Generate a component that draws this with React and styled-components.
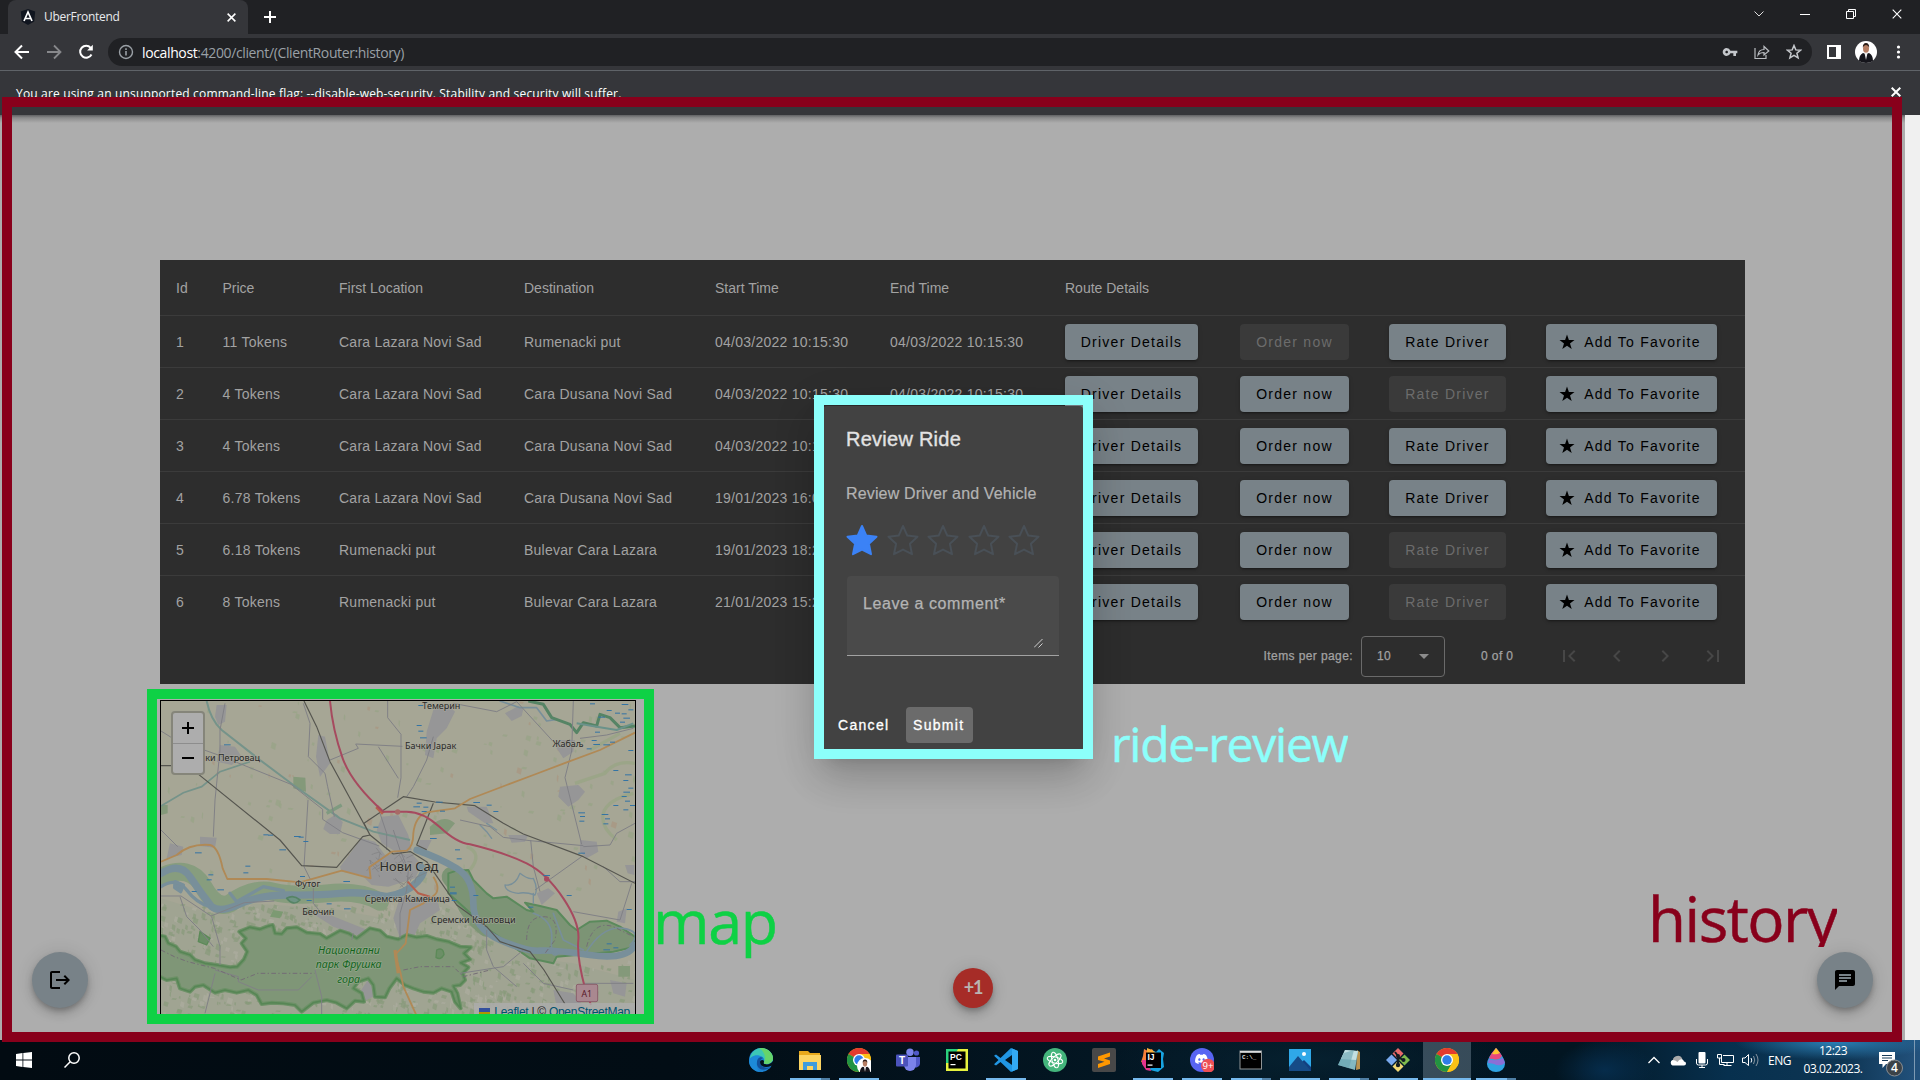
import React from "react";
import styled, { createGlobalStyle, css } from "styled-components";
import { MdLogout, MdChat, MdFirstPage, MdChevronLeft, MdChevronRight, MdLastPage, MdVpnKey } from "react-icons/md";
import { FaDiscord } from "react-icons/fa";

const ui = `"Open Sans", "Noto Sans", sans-serif`;
const arial = `"Liberation Sans", Arial, sans-serif`;

const Global = createGlobalStyle`
  * { box-sizing: border-box; }
  body { margin: 0; background: #202124; overflow: hidden; }
  svg { display: block; }
`;

const Screen = styled.div`
  position: relative;
  width: 1920px;
  height: 1080px;
  display: flex;
  flex-direction: column;
  overflow: hidden;
  font-family: ${arial};
`;

/* ---------- browser chrome ---------- */

const TabStrip = styled.header`
  height: 34px;
  background: #202124;
  display: flex;
  padding-left: 8px;
  font-family: ${ui};
`;

const Tab = styled.div`
  width: 240px;
  height: 34px;
  background: #35363a;
  border-radius: 8px 8px 0 0;
  display: flex;
  align-items: center;
  padding: 0 12px 0 12px;
  color: #e8eaed;
  font-size: 12px;
`;

const TabTitle = styled.span`
  flex: 1;
  margin-left: 8px;
  letter-spacing: -0.3px;
  line-height: 34px;
`;

const NewTab = styled.div`
  width: 28px;
  margin-left: 8px;
  display: grid;
  place-items: center;
`;

const WindowButtons = styled.div`
  margin-left: auto;
  display: flex;
  padding-bottom: 6px;
`;

const WindowButton = styled.div`
  width: 46px;
  display: grid;
  place-items: center;
`;

const Toolbar = styled.div`
  height: 37px;
  background: #35363a;
  border-bottom: 1px solid #5f6368;
  display: flex;
  align-items: center;
  padding-left: 12px;
`;

const NavIcons = styled.div`
  display: flex;
  gap: 12px;
  width: 96px;
`;

const AddressBar = styled.div`
  width: 1704px;
  height: 28px;
  border-radius: 14px;
  background: #202124;
  display: flex;
  align-items: center;
  padding: 0 10px 0 10px;
  font: 14px ${ui};
`;

const Url = styled.span`
  flex: 1;
  margin-left: 8px;
  color: #9aa0a6;
  letter-spacing: -0.37px;
  b { color: #fff; font-weight: 400; }
`;

const BarIcons = styled.div`
  display: flex;
  gap: 16px;
`;

const Extras = styled.div`
  display: flex;
  align-items: center;
  margin-left: 13px;
  gap: 12px;
`;

const InfoBar = styled.div`
  height: 44px;
  background: #35363a;
  color: #fff;
  display: flex;
  justify-content: space-between;
  align-items: flex-start;
  padding: 14px 19px 0 16px;
  font: 12px/18px ${ui};
`;

const InfoText = styled.span`
  letter-spacing: 0.17px;
`;

const InfoClose = styled.span`
  padding-top: 2px;
`;

/* ---------- page ---------- */

const Viewport = styled.main`
  height: 925px;
  display: flex;
  background: #f0f0f0;
`;

const Content = styled.div`
  position: relative;
  width: 1905px;
  background: #adadad;
  padding: 145px 160px 0;
  &::before {
    content: "";
    position: absolute;
    inset: 0 0 auto 0;
    height: 8px;
    background: linear-gradient(#606163, #8a8a8b 35%, #adadad);
  }
`;

const TableCard = styled.section`
  width: 1585px;
  height: 424px;
  background: #2d2d2d;
  color: #a2a2a2;
  font-size: 14px;
`;

const Row = styled.div`
  height: ${(p) => (p.$head ? 56 : 52)}px;
  display: grid;
  grid-template-columns: 46.5px 116.5px 185px 191px 175px 175px 175px 149px 157px 1fr;
  align-items: center;
  padding-left: 16px;
  border-bottom: 1px solid ${(p) => (p.$last ? "transparent" : "#3b3b3b")};
  letter-spacing: ${(p) => (p.$head ? 0 : 0.25)}px;
`;

const Button = styled.div`
  width: ${(p) => p.$w}px;
  height: 36px;
  border-radius: 4px;
  background: #788288;
  color: #000;
  display: flex;
  align-items: center;
  justify-content: center;
  gap: 8px;
  letter-spacing: 1.25px;
  white-space: nowrap;
  padding-right: ${(p) => (p.$icon ? 4 : 0)}px;
  box-shadow: 0 3px 1px -2px rgba(0, 0, 0, 0.2), 0 2px 2px 0 rgba(0, 0, 0, 0.14), 0 1px 5px 0 rgba(0, 0, 0, 0.12);
  ${(p) => p.$disabled && css`
    background: #3a3a3a;
    color: #6c6c6c;
    box-shadow: none;
  `}
`;

const Paginator = styled.div`
  height: 56px;
  display: flex;
  align-items: center;
  justify-content: flex-end;
  padding-right: 8px;
  font-size: 12px;
  letter-spacing: 0.4px;
  -webkit-text-stroke: 0.25px #a2a2a2;
`;

const PageSize = styled.div`
  width: 84px;
  height: 41px;
  margin: 0 36px 0 8px;
  border: 1px solid #6a6a6a;
  border-radius: 4px;
  display: flex;
  align-items: center;
  justify-content: space-between;
  padding: 0 15px 0 15px;
`;

const Range = styled.span`
  width: 64px;
`;

const PageButton = styled.span`
  width: 48px;
  display: grid;
  place-items: center;
  color: #474747;
`;

const MapBox = styled.section`
  position: relative;
  width: 476px;
  height: 320px;
  margin-top: 16px;
  border: 1px solid #000;
  background: #a6a695;
  overflow: hidden;
`;

const ZoomControl = styled.div`
  position: absolute;
  left: 10px;
  top: 10px;
  width: 34px;
  border: 2px solid #85857a;
  border-radius: 4px;
  background: #adadad;
`;

const ZoomButton = styled.div`
  height: 30px;
  display: grid;
  place-items: center;
  & + & { border-top: 1px solid #8d8d8d; }
`;

const Attribution = styled.div`
  position: absolute;
  right: 0;
  top: 302px;
  height: 18px;
  display: flex;
  align-items: center;
  padding: 0 5px;
  background: rgba(173, 173, 173, 0.8);
  font-size: 12px;
  letter-spacing: -0.28px;
  color: #222;
  white-space: pre;
  u { color: #00516f; }
  svg { margin-right: 4px; }
`;

const Fab = styled.div`
  position: absolute;
  left: ${(p) => p.$x}px;
  top: 837px;
  width: 56px;
  height: 56px;
  border-radius: 50%;
  background: #788288;
  color: #000;
  display: grid;
  place-items: center;
  box-shadow: 0 3px 5px -1px rgba(0, 0, 0, 0.2), 0 6px 10px rgba(0, 0, 0, 0.14), 0 1px 18px rgba(0, 0, 0, 0.12);
`;

const Counter = styled.div`
  position: absolute;
  left: 953px;
  top: 853px;
  width: 40px;
  height: 40px;
  border-radius: 50%;
  background: #a62c27;
  color: #b9b4b2;
  font: 700 18px/39px Lato, sans-serif;
  text-align: center;
  letter-spacing: -1.2px;
  box-shadow: 0 3px 5px -1px rgba(0, 0, 0, 0.2), 0 6px 10px rgba(0, 0, 0, 0.14), 0 1px 18px rgba(0, 0, 0, 0.12);
`;

const Dialog = styled.section`
  position: absolute;
  left: 823px;
  top: 291px;
  width: 260px;
  height: 346px;
  border-radius: 4px;
  background: #424242;
  color: #e3e3e3;
  padding: 20px 24px 0 23px;
  box-shadow: 0 11px 15px -7px rgba(0, 0, 0, 0.2), 0 24px 38px 3px rgba(0, 0, 0, 0.14), 0 9px 46px 8px rgba(0, 0, 0, 0.12);
`;

const DialogTitle = styled.h2`
  margin: 0;
  font: 400 20px/26px ${arial};
  letter-spacing: 0.25px;
  -webkit-text-stroke: 0.35px #e3e3e3;
`;

const DialogText = styled.p`
  margin: 30px 0 0;
  font-size: 16px;
  line-height: 24px;
  letter-spacing: 0.15px;
  color: #b3b3b3;
  white-space: nowrap;
  -webkit-text-stroke: 0.2px #b3b3b3;
`;

const Stars = styled.div`
  display: flex;
  gap: 8.5px;
  margin-top: 18px;
`;

const Comment = styled.div`
  width: 212px;
  height: 80px;
  margin: 20px 0 0 1px;
  border-radius: 4px 4px 0 0;
  border-bottom: 1px solid #a2a2a2;
  background: #4a4a4a;
  color: #b4b4b4;
  font-size: 16px;
  letter-spacing: 0.58px;
  padding: 19px 16px 7px 16px;
  display: flex;
  flex-direction: column;
  justify-content: space-between;
  -webkit-text-stroke: 0.25px #b4b4b4;
  svg { align-self: flex-end; }
`;

const Actions = styled.div`
  display: flex;
  margin: 51px 0 0 -15px;
  gap: 9px;
`;

const Action = styled.div`
  width: ${(p) => p.$w}px;
  height: 36px;
  border-radius: 4px;
  background: ${(p) => (p.$filled ? "#6b6b6b" : "transparent")};
  color: #fff;
  font-size: 14px;
  line-height: 36px;
  letter-spacing: 1.3px;
  padding-left: 7px;
  -webkit-text-stroke: 0.3px #fff;
`;

/* ---------- annotations over the page ---------- */

const Frame = styled.div`
  position: absolute;
  left: ${(p) => p.$x}px;
  top: ${(p) => p.$y}px;
  width: ${(p) => p.$w}px;
  height: ${(p) => p.$h}px;
  border: 10px solid ${(p) => p.$color};
`;

const Note = styled.div`
  position: absolute;
  left: ${(p) => p.$x}px;
  top: ${(p) => p.$y}px;
  height: ${(p) => p.$h}px;
  overflow: hidden;
  color: ${(p) => p.$color};
  font: ${(p) => p.$size}px/${(p) => p.$size + 20}px ${ui};
  letter-spacing: ${(p) => p.$ls || 0}px;
  white-space: nowrap;
  -webkit-text-stroke: 0.5px ${(p) => p.$color};
`;

/* ---------- taskbar ---------- */

const Taskbar = styled.footer`
  height: 40px;
  display: flex;
  align-items: stretch;
  background:
    radial-gradient(ellipse 100px 18px at 1835px 2px, #2b7fb5, transparent),
    radial-gradient(ellipse 50px 30px at 1605px 30px, #062c4b, transparent),
    radial-gradient(ellipse 200px 40px at 1310px 20px, #06202f, transparent),
    linear-gradient(90deg, #020b12, #020d15 35%, #031724 60%, #021521 82%, #07304e 90%, #0e3553 96%, #23527d);
  color: #fff;
  font-family: ${ui};
`;

const SystemIcons = styled.div`
  width: 737px;
  display: flex;
  align-items: center;
  gap: 32px;
  padding-left: 16px;
`;

const Apps = styled.div`
  display: flex;
  gap: 1px;
  width: 783px;
`;

const AppButton = styled.div`
  position: relative;
  width: 48px;
  flex: none;
  display: grid;
  place-items: center;
  background: ${(p) => (p.$run === "active" ? "rgba(120,140,155,0.45)" : "transparent")};
  &::after {
    content: "";
    position: absolute;
    bottom: 0;
    left: ${(p) => (p.$run === "active" ? 0 : 4)}px;
    right: ${(p) => (p.$run === "active" ? 0 : 4)}px;
    height: 2px;
    background: ${(p) =>
      !p.$run ? "none" : p.$run === "many" ? "linear-gradient(90deg,#76b9ed 31px,#4f7fa5 31px)" : "#76b9ed"};
  }
`;

const Tray = styled.div`
  flex: 1;
  display: flex;
  align-items: center;
  padding-left: 127px;
`;

const TrayIcons = styled.div`
  display: flex;
  align-items: center;
  width: 121px;
  gap: 8px;
`;

const Lang = styled.span`
  width: 32px;
  font-size: 12px;
  letter-spacing: -0.45px;
`;

const Clock = styled.div`
  width: 66px;
  font-size: 12px;
  line-height: 18px;
  letter-spacing: -0.5px;
  text-align: center;
  white-space: nowrap;
`;

const Notices = styled.div`
  margin-left: 13px;
  width: 36px;
  height: 40px;
  border-right: 1px solid #7d9ab3;
`;

/* ---------- data ---------- */

const rides = [
  [1, "11 Tokens", "Cara Lazara Novi Sad", "Rumenacki put", "04/03/2022 10:15:30", "04/03/2022 10:15:30", false, true],
  [2, "4 Tokens", "Cara Lazara Novi Sad", "Cara Dusana Novi Sad", "04/03/2022 10:15:30", "04/03/2022 10:15:30", true, false],
  [3, "4 Tokens", "Cara Lazara Novi Sad", "Cara Dusana Novi Sad", "04/03/2022 10:15:30", "04/03/2022 10:15:30", true, true],
  [4, "6.78 Tokens", "Cara Lazara Novi Sad", "Cara Dusana Novi Sad", "19/01/2023 16:04:12", "19/01/2023 16:14:12", true, true],
  [5, "6.18 Tokens", "Rumenacki put", "Bulevar Cara Lazara", "19/01/2023 18:21:40", "19/01/2023 18:31:40", true, false],
  [6, "8 Tokens", "Rumenacki put", "Bulevar Cara Lazara", "21/01/2023 15:20:10", "21/01/2023 15:30:10", true, false],
];

/* ---------- small drawings ---------- */

const Cross = ({ s = 10, w = 1.6, c = "#fff" }) => (
  <svg width={s} height={s} viewBox="0 0 10 10" stroke={c} strokeWidth={w}><path d="M.7.7l8.6 8.6M9.3.7L.7 9.3" /></svg>
);

const FavoriteStar = () => (
  <svg width="18" height="18" viewBox="0 0 18 18"><path d="M9 1.500l1.900 5.500H16.500l-4.500 3.400 1.700 5.600L9 12.700 4.300 16 6 10.400 1.500 7h5.600z" /></svg>
);

const RatingStar = ({ on }) => (
  <svg width="32" height="32" viewBox="0 0 32 32">
    <path
      d="M16 2l4.300 9.600 10.200 1.100-7.600 7L25 30.200 16 25.600l-9 4.600 2.100-10.500-7.600-7 10.200-1.100z"
      fill={on ? "#3b82f6" : "none"}
      stroke={on ? "#3b82f6" : "#495057"}
      strokeWidth="2"
      strokeLinejoin="round"
    />
  </svg>
);

const Avatar = ({ s = 22 }) => (
  <svg width={s} height={s} viewBox="0 0 22 22">
    <circle cx="11" cy="11" r="11" fill="#fff" />
    <path d="M4 20q0-6 4-8l3 1 3-1q4 2 4 8-3 2-7 2t-7-2z" fill="#15151b" />
    <path d="M9.500 12l1.500 7 1.500-7z" fill="#eee" />
    <ellipse cx="11" cy="7.500" rx="3" ry="4.300" fill="#b57d62" />
    <path d="M7.800 6.500q0-4.500 3.200-4.500t3.200 4.500q-1-2.500-3.200-2.500t-3.200 2.500z" fill="#2b1d18" />
  </svg>
);

function makeRandom(seed) {
  let s = seed;
  return () => {
    s = (s * 16807) % 2147483647;
    return s / 2147483647;
  };
}

function Speckles() {
  const r = makeRandom(77);
  const items = [];
  for (let i = 0; i < 1250; i++) {
    const x = 63 + r() * 1422;
    const south = i < 1100;
    const y = south ? 670 + r() * 335 : 63 + r() * 560;
    if (south && x > 1060 && y < 840) continue;
    if (south && x > 1280 && r() > 0.3) continue;
    const w = 3 + r() * 12;
    const h = 3 + r() * 16;
    items.push(
      <path
        key={i}
        d={`M${x} ${y}l${w} ${h * 0.3}l${-w * 0.3} ${h}l${-w} ${-h * 0.4}z`}
        fill={south ? (r() > 0.3 ? "#879a7b" : "#adaca0") : r() > 0.25 ? "#97a486" : "#a99680"}
        opacity={0.7}
      />
    );
  }
  return items;
}

function Streets() {
  const r = makeRandom(19);
  const lines = [];
  for (let i = 0; i < 34; i++) {
    const x = 690 + r() * 140;
    const y = 520 + r() * 80;
    lines.push(<path key={i} d={`M${x} ${y}l${r() * 70 - 35} ${r() * 60 - 30}`} />);
  }
  return <g stroke="#7e7e80" strokeWidth="2">{lines}</g>;
}

const blueDashes = [
  [252, 193], [370, 463], [384, 464], [462, 468], [476, 470], [490, 483], [418, 508], [316, 557], [310, 577], [165, 517],
  [205, 583], [200, 598], [232, 628], [155, 633], [480, 588], [610, 603], [500, 660], [560, 670], [612, 685], [830, 135], [835, 152],
  [840, 172], [830, 368], [850, 380], [820, 379], [900, 392], [845, 393], [888, 365], [700, 440], [930, 620], [930, 640], [1350, 70],
  [1400, 90], [1445, 72], [1425, 98], [1445, 100], [1450, 113], [1440, 125], [1465, 88], [1375, 110], [1365, 155], [1355, 180],
  [1360, 192], [1340, 205], [1410, 185], [1390, 193], [1465, 210], [1420, 270], [1455, 283], [1450, 300], [1465, 323], [1450, 335],
  [1445, 348], [1455, 362], [1470, 375], [1450, 388], [1420, 375], [1385, 402], [1395, 415], [1390, 430], [1315, 397], [1320, 408],
  [1318, 422], [1315, 518], [1280, 645], [1165, 680], [1210, 585], [1400, 790], [1420, 802], [1390, 808], [1460, 687], [835, 75],
  [1000, 366], [1040, 374], [1060, 393], [870, 474], [945, 508], [950, 535], [930, 637], [935, 660], [1000, 645],
];

const towns = [
  "M230 75l30 0-5 50-20 10-10-25z", "M240 195l45 5 20 30-30 25-45-10z", "M535 165l20 5 15 80-30 40-12-60z",
  "M560 420l30-18 18 25-8 35-30 0-20-15z", "M90 490l40 10-5 25-45 10z", "M180 470l50 3-5 30-45-5z",
  "M880 90l45-15 20 20-25 50-30 30-10 60-25-10 5-70z", "M1095 100l40-22 15 10-5 20-30 15z", "M1255 180l50 0-5 35-30 20-20-30z",
  "M1260 320l55-5 20 20-20 25-30 20-30-30z", "M1320 480l50 5 5 30-35 20-20-20z", "M980 380l60 0 20 50-25 0-50-35z",
  "M1105 465l60 0-10 20-40 3z", "M1190 640l35-15 20 15-40 35z", "M1435 695l25-10-5 45-25-5z",
  "M725 410l50-5 30 60 10 45-40 10-50-30-15-40z", "M600 560l65-85 40 10 30 40 80-5 30 35-20 40-80 25-50-5-30-30-60-10z",
  "M780 650l110 0 10 40-60 40-20 45-40 0-20-60z", "M510 695l60 10 150 60 30 20-60-5-110-40z", "M690 890l30 10 0 40-60 30-10-20z",
  "M1160 790l60 15-10 35-50-10z", "M1240 930l60 10 40 50-60 20-30-30z", "M1410 900l50 10-5 40-35-10z", "M1455 555l28 0 0 30-20-5z",
  "M840 480l35 0-15 30-30-5z",
];

const labels = [
  [904, 87, 27, "Темерин"], [872, 208, 27, "Бачки Јарак"], [278, 242, 27, "ки Петровац"], [1284, 200, 27, "Жабаљ"],
  [807, 572, 38.5, "Нови Сад"], [503, 622, 27, "Футог"], [535, 706, 27, "Беочин"], [802, 666, 27.5, "Сремска Каменица"],
  [1000, 728, 27.5, "Сремски Карловци"],
];

const parkEdge =
  "M50 765L75 770 85 790 108 800 120 815 150 825 165 840 195 850 230 855 270 862 292 860 312 838 322 815 305 790 318 775 298 755 330 742 360 748 380 740 398 735 405 760 425 762 440 745 470 742 500 758 540 762 560 775 600 752 625 760 650 775 690 745 720 752 740 770 775 778 800 765 830 772 860 768 890 778 925 785 960 800 992 802 972 820 990 838 962 848 985 862 968 880 975 900 960 915 940 918 952 940 962 985 945 965 935 935 905 925 880 938 850 935 820 925 795 915 770 895 748 925 735 952 705 950 700 915 685 895 655 905 640 925 665 940 672 965 645 962 620 985 590 968 560 960 520 968 485 995 465 975 430 970 395 968 365 972 350 945 325 930 290 938 255 930 225 938 190 915 165 920 150 935 120 925 110 895 80 900 50 885z";

function CityMap() {
  return (
    <svg width="474" height="314" viewBox="63 63 1422 942">
      <rect x="63" y="63" width="1422" height="942" fill="#a6a695" />
      <path d="M63 655L210 700 330 670 480 680 600 690 760 720 900 660 1040 750 1150 830 1300 850 1485 900 1485 1005 63 1005z" fill="#a0a492" />
      <g fill="none" stroke="#98a585" strokeWidth="10" opacity=".8">
        <path d="M1485 250q-60-10-90 30l-90 30M1480 340q-80 20-90 60t40 80M1350 210l90-50" />
        <path d="M980 500q50 20 10 70" />
      </g>
      <Speckles />
      <g fill="#969697">{towns.map((d) => <path key={d} d={d} />)}</g>
      <path d="M460 290l36 3 2 42-38-10zM870 440q40-40 75-10l-25 30-50 5zM1435 858l35 0 0 32-35 0zM63 375l20 0 0 25-20 5z" fill="#84997a" />

      <g fill="none" strokeLinecap="round" strokeLinejoin="round">
        <path d="M63 590Q150 550 190 620T270 670Q340 620 400 635T560 640T720 665" stroke="#879d7e" strokeWidth="54" />
        <path d="M935 590Q960 620 975 660T1040 740" stroke="#7c9475" strokeWidth="60" />
      </g>
      <path
        d="M925 580L950 572 985 570 1000 600 1040 640 1060 655 1100 650 1160 690 1180 695 1155 668 1200 678 1250 690 1290 735 1310 750 1350 725 1400 722 1440 740 1485 770 1485 800 1420 815 1250 830 1240 850 1170 835 1040 745 970 680 925 640z"
        fill="#7c9475" stroke="#5b8a5c" strokeWidth="6" strokeLinejoin="round"
      />
      <g fill="none" stroke="#788f9a" strokeLinecap="round" strokeLinejoin="round">
        <path d="M63 580Q120 545 150 590T215 680Q240 700 300 672T450 645T600 640T740 650Q800 640 832 605T840 560" strokeWidth="22" />
        <path d="M830 510Q900 535 950 565T1000 670T1080 780T1200 812T1350 825T1485 795" strokeWidth="20" />
        <path d="M63 620Q110 590 140 630T210 680M270 640L290 665 370 620 430 632" strokeWidth="10" />
        <path d="M105 605l25 10-8 20-18-12z" fill="#788f9a" strokeWidth="10" />
        <path d="M1095 615q30 5 45-35 25 20 40 15 15 30 5 50-30-10-50-5-40-5-40-25zM1180 640l0 30M1020 435l20 20 15 20M1040 430l30 20" strokeWidth="4" />
        <path d="M1080 63l60 20 50 0 30 40 30-5" strokeWidth="5" />
        <path d="M1180 700q60 20 55 80t20 40M1340 815q50-80 110-70t20 50M1240 700l30 80 60 30" strokeWidth="5" />
      </g>
      <g fill="none" stroke="#568465" strokeWidth="9" strokeLinejoin="round">
        <path d="M1165 63l45 10 25 40 55 20 20 25 20-30 40 10 10-35 30 10 30 30 45-5" />
        <path d="M1310 130l60 10 60 10 50-20" stroke="#6a928a" strokeWidth="6" />
        <path d="M440 655q20-12 40 5-20 20-40-5z" fill="#6f9484" strokeWidth="5" />
      </g>

      <path d={parkEdge} fill="#7f9677" stroke="#6d9167" strokeWidth="12" strokeLinejoin="round" />
      <path d={parkEdge} fill="none" stroke="#578655" strokeWidth="5" strokeLinejoin="round" />
      <path d="M890 810q20-10 22 14-10 18-24 8zM180 755l30 20-10 20-25-10z" fill="#6b8f66" stroke="#5c8a58" strokeWidth="4" />
      <path d="M400 690l30 5-10 20-30-5z" fill="#7c9a72" />

      <g fill="none" stroke="#75938a" strokeWidth="6">
        <path d="M200 63Q212 120 245 150L360 240 460 315 600 415 700 455 810 480" />
        <path d="M63 378L130 338 185 320 240 275 330 245" strokeWidth="5" />
        <path d="M560 400l45-25" stroke="#7f9a80" strokeWidth="10" />
      </g>

      <g fill="none" stroke="#818186" strokeWidth="3" strokeLinejoin="round">
        <path d="M255 70l-15 80 0 60-15 150-5 110M63 153l40 25 140 50 210 85 95 75 0 30 60 40 110 40" />
        <path d="M490 70l20 60-5 100 50 50 8 40 20 90M570 240l85-35-8-13 140 7M715 200l60 95M743 63l0 50 40 50 0 130-10 60" />
        <path d="M880 170l-20 70-40 80-20 30M504 360l-12 200 20 40M63 450l50 50M520 610l0 60 25 30" />
        <path d="M940 70l130 25 60-30 110 120M1300 63l-5 150 -20 80 50 200M1330 500l80-5 20-35 55-30M1325 530l-140 100M1390 560l50 45 45 0M1172 480l8 80 20 75" />
        <path d="M1475 610l-35 110-140-25M63 648l60 0 90 60 100-40 90-5M215 710l25 90 0 55M960 420l90 20 40 32 80 10 160 15" />
        <path d="M225 870l70 20 0 15 60 25 120 0 40-40M225 880l-30 120M525 870l20 80 0 60M1040 750l0 60 20 50 70 60M960 880l130-20 60-50M1150 850l60 60 90 20M1330 910l150 0M760 450l20 60 25 60-5 60-20 70 0 75" />
        <path d="M1320 175l80-10 80-20M120 650l20 60 40 40 40 50M640 760l-5 20M720 400l20 60 0 50" />
      </g>
      <g fill="none" stroke="#746d75" strokeWidth="3" strokeDasharray="14 7 4 7">
        <path d="M63 810l40 20 40 15 80 20 80 35 50-20 170 0M790 870l50-10 100 0 30 30 80-20" />
        <path d="M1160 780q0-70 50-70t35 70l-30 40M1340 800q20-80 80-60l60 30" />
      </g>
      <Streets />

      <g fill="none" stroke="#55554f" strokeWidth="3.500" strokeLinejoin="round">
        <path d="M63 257l37 0M172 280L420 480 485 557 590 562 668 470 690 465 760 522 812 515 860 545 905 610 950 675 1040 740 1080 785 1170 815 1212 870 1275 972" />
        <path d="M492 63L530 140 570 245 690 465M690 465L672 430 790 350 885 366 1005 377 1090 430 1150 462 1330 530 1485 610M880 370l-50 125 30 14" />
      </g>

      <g fill="none" stroke="#b08956" strokeWidth="5.500" strokeLinejoin="round">
        <path d="M63 545L110 525Q150 490 210 495 235 500 248 565L262 597 380 597 480 607 605 572 692 595 688 562 755 515 800 512Q820 500 820 460 825 410 860 397L945 385 990 357 1100 315 1180 285 1280 247 1380 210 1485 158" />
        <path d="M880 590Q905 630 880 648L850 670 810 690 797 790 765 825 782 880 790 920 828 1003" />
        <path d="M765 810l10 70" strokeWidth="10" />
      </g>
      <path d="M803 605L835 640 870 650" fill="none" stroke="#b5614d" strokeWidth="6" />
      <path d="M710 380l20 20" stroke="#b5614d" strokeWidth="12" />
      <path d="M570 63Q578 150 608 235 635 310 730 395L800 395Q850 395 900 442T990 493Q1100 520 1160 550T1270 655T1315 780T1335 925L1353 975" fill="none" stroke="#a64a5f" strokeWidth="6" />
      <circle cx="773" cy="396" r="8" fill="#a86a66" /><circle cx="1220" cy="597" r="8" fill="#a64a5f" />

      <g fill="#3474a4">{blueDashes.map(([x, y], i) => <rect key={i} x={x} y={y} width={i % 3 ? 15 : 20} height="3" />)}</g>

      <rect x="1309" y="913" width="64" height="52" rx="5" fill="#a98890" stroke="#8b5f6b" strokeWidth="3" />
      <g fontFamily="Noto Sans, sans-serif" textAnchor="middle" fill="#2a2a28" stroke="#a8a89c" strokeWidth="5" paintOrder="stroke" strokeLinejoin="round">
        {labels.map(([x, y, s, t]) => <text key={t} x={x} y={y} fontSize={s} strokeOpacity=".65">{t}</text>)}
        <text x="1340" y="950" fontSize="26" strokeWidth="0" fill="#571728">A1</text>
        <g fontSize="32" fontStyle="italic" fill="#14641c" stroke="#93a78c" strokeWidth="4">
          <text x="627" y="822">Национални</text>
          <text x="626" y="865">парк Фрушка</text>
          <text x="626" y="908">гора</text>
        </g>
      </g>
    </svg>
  );
}

/* ---------- taskbar icons ---------- */

const Svg = ({ children, s = 24 }) => <svg width={s} height={s} viewBox="0 0 24 24">{children}</svg>;

const ChromeIcon = () => (
  <g>
    <circle cx="12" cy="12" r="12" fill="#fbc116" />
    <path d="M12 12L1.600 6A12 12 0 0 1 22.400 6z" fill="#e33b2e" />
    <path d="M1.600 6A12 12 0 0 0 12 24l5.200-9L12 12z" fill="#229342" />
    <path d="M12 6h10.400A12 12 0 0 1 12 24l5.200-9z" fill="#fbc116" />
    <circle cx="12" cy="12" r="6" fill="#fff" />
    <circle cx="12" cy="12" r="4.700" fill="#2f7de9" />
  </g>
);

const IntelliJIcon = () => (
  <g>
    <path d="M11 2l4 2 3-3 5 4-1 6 1 8-6 5-8-2z" fill="#17a3e0" />
    <path d="M3 1l4 2 4-2 3 6-9 9-5-2 2-6z" fill="#f8803b" />
    <path d="M6 0l5 2 4 3-9 3z" fill="#fbb03b" />
    <path d="M1 12l5 0 4 11-5-1-4-6z" fill="#e8348d" />
    <rect x="5" y="4.500" width="15" height="15.500" fill="#000" />
    <text x="6.500" y="12" fontFamily="Liberation Sans, sans-serif" fontWeight="700" fontSize="8.500" fill="#fff">IJ</text>
    <rect x="6.500" y="16.500" width="5" height="1.200" fill="#fff" />
  </g>
);

const apps = [
  ["edge", null, <g>
    <circle cx="12" cy="12" r="12" fill="#1b7fcf" />
    <path d="M1 9C3 3 8 0 12 0c8 0 12 6 12 10 0 4-3 6-7 6-3 0-3-1-2-2 1-3-1-6-5-6-4 0-8 1-9 6z" fill="#3cc7b5" />
    <path d="M10 0c8-1 14 5 14 10 0 4-3 6-7 6-2 0-3-1-2-2 3-5-1-12-5-14z" fill="#66d46b" />
    <path d="M8 14c0-4 3-6 5-5-4-4-13-1-13 4 0 6 5 11 12 11-3-1-5-5-4-10z" fill="#1d8ad8" />
    <path d="M8 14c-1 6 5 11 14 5-4 2-10 0-11-4 0-3 1-4 3-5-3-2-6 1-6 4z" fill="#12519b" />
    <path d="M11 14c0 5 6 6 11 4 2-1 0 2-2 4l4-5V13c-2 3-6 4-8 3-2 0-1-2-1-3-1-2-4-1-4 1z" fill="#04121c" />
  </g>],
  ["files", "many", <g><path d="M1 3h9l2 2h10v17H1z" fill="#e8a91c" /><path d="M1 7h22v15H1z" fill="#fcd462" /><path d="M5 22v-8h14v8h-4v-4H9v4z" fill="#3e9bdc" /></g>],
  ["chrome-user", "one", <g><ChromeIcon /><svg x="10" y="10" width="16" height="16"><Avatar s={16} /></svg></g>],
  ["teams", null, <g><circle cx="20.500" cy="5" r="2.600" fill="#5059c9" /><circle cx="14" cy="4.200" r="3.700" fill="#7b83eb" /><path d="M17 9h7v7a4 4 0 0 1-7 2z" fill="#5059c9" /><path d="M8 9h12v8a6 6 0 0 1-12 0z" fill="#7b83eb" /><rect y="6.500" width="12" height="12" rx="1" fill="#4b53bc" /><text x="3" y="16" fontFamily="Liberation Sans, sans-serif" fontWeight="700" fontSize="10" fill="#fff">T</text></g>],
  ["pycharm", null, <g><rect x="1" y="1" width="22" height="22" fill="#e7f33f" /><path d="M1 1h12L5 15H1z" fill="#2bd17d" /><rect x="3.500" y="3.500" width="17" height="17" fill="#000" /><text x="5" y="12" fontFamily="Liberation Sans, sans-serif" fontWeight="700" fontSize="8.500" fill="#fff">PC</text><rect x="5.500" y="16" width="5" height="1.200" fill="#fff" /></g>],
  ["vscode", "one", <g><path d="M17 0L6.500 10 2 6.500 0 7.800l4.500 4.200L0 16.200l2 1.300L6.500 14 17 24l7-3V3zM18 7v10l-7-5z" fill="#2196e3" fillRule="evenodd" /><path d="M18 .4l6 2.600v18l-6 2.600z" fill="#33a9f3" /></g>],
  ["atom", null, <g><circle cx="12" cy="12" r="12" fill="#44b57c" /><g fill="none" stroke="#fff" strokeWidth="1"><ellipse cx="12" cy="12" rx="8" ry="3" transform="rotate(15 12 12)" /><ellipse cx="12" cy="12" rx="8" ry="3" transform="rotate(75 12 12)" /><ellipse cx="12" cy="12" rx="8" ry="3" transform="rotate(135 12 12)" /></g><circle cx="12" cy="12" r="1.300" fill="#fff" /></g>],
  ["sublime", null, <g><rect width="24" height="24" rx="2" fill="#484848" /><path d="M6 8.500l12-4v4l-6 2 6 2v3.500L6 20v-4l6.500-2.200L6 12z" fill="#ff9800" /></g>],
  ["intellij", "one", <IntelliJIcon />],
  ["discord", "one", <g><circle cx="12" cy="12" r="12" fill="#5865f2" /><svg x="4.500" y="4" width="14" height="14"><FaDiscord size={14} color="#fff" /></svg><circle cx="18" cy="17.800" r="7" fill="#ee5055" /><text x="18" y="21.300" textAnchor="middle" fontFamily="Noto Sans, sans-serif" fontSize="9.500" fill="#fff">9+</text></g>],
  ["terminal", "many", <g><rect x=".5" y="2.500" width="22.500" height="19" fill="#8f9496" /><rect x="1.500" y="5" width="20.500" height="15.500" fill="#000" /><rect x="1" y="3" width="21" height="1.500" fill="#dcdcdc" /><text x="3" y="11" fontFamily="Liberation Mono, monospace" fontWeight="700" fontSize="6" fill="#ddd">C:\_</text></g>],
  ["photos", "one", <g><rect x="1" y="1" width="22" height="22" fill="#2fa8e8" /><path d="M10 18l6-6 7 7v4H13z" fill="#123f80" /><path d="M1 19L10 8l13 15H1z" fill="#164b87" /><circle cx="16" cy="6" r="2" fill="#fff" /></g>],
  ["notes", "many", <g><path d="M20 2l3 2v17l-4 1z" fill="#b99250" /><path d="M8 2l13 1-3 19L1 17z" fill="#83b8c1" /><path d="M8 2l13 1-2 9L4 11z" fill="#c2dfe2" /><path d="M7 5l10-3-5 18-11-3z" fill="#67a3b0" opacity=".6" /></g>],
  ["git", "one", <g><path d="M12 0l5.500 5.500L12 11 6.500 5.500z" fill="#e66a6a" /><path d="M5.500 6.500L11 12l-5.500 5.500L0 12z" fill="#79a9ee" /><path d="M18.500 6.500L24 12l-5.500 5.500L13 12z" fill="#7fbb4d" /><path d="M12 13l5.500 5.500L12 24l-5.500-5.500z" fill="#f1d873" /><path d="M9 4l3 4v10M12 9l5 3" stroke="#121c22" strokeWidth="2" fill="none" /><g fill="#121c22"><circle cx="12" cy="8" r="2" /><circle cx="12" cy="17" r="2.200" /><circle cx="17.500" cy="12" r="2" /></g></g>],
  ["chrome", "active", <ChromeIcon />],
  ["paint", "many", <g><path d="M12 0q9 10 9 16a9 8 0 0 1-18 0Q3 10 12 0z" fill="#2fa3e2" /><path d="M12 0q4 4 6 8-3 5-9 3-3 0-4-1 2-5 7-10z" fill="#e8487e" /><path d="M12 0l4 5q-3 2-8 1z" fill="#ffc531" /><path d="M5 11q6 3 14-1l2 5q-5 4-11 1-5-1-6-1z" fill="#8b6fd6" /></g>],
];

/* ---------- screen ---------- */

export default function App() {
  return (
    <Screen>
      <Global />
      <TabStrip>
        <Tab>
          <svg width="16" height="16" viewBox="0 0 16 16">
            <path d="M8 0l7.200 2.500-1 10L8 16l-6.200-3.500-1-10z" fill="#10151f" />
            <path d="M4 12L8 3l4 9M5.500 9.500h5" stroke="#fff" strokeWidth="1.700" fill="none" />
          </svg>
          <TabTitle>UberFrontend</TabTitle>
          <Cross s={9} w={1.7} />
        </Tab>
        <NewTab><svg width="12" height="12" viewBox="0 0 12 12" stroke="#fff" strokeWidth="2"><path d="M6 0v12M0 6h12" /></svg></NewTab>
        <WindowButtons>
          <WindowButton><svg width="10" height="6" viewBox="0 0 10 6" fill="none" stroke="#ddd"><path d="M.5.5L5 5 9.500.5" /></svg></WindowButton>
          <WindowButton><svg width="10" height="1"><rect width="10" height="1" fill="#fff" /></svg></WindowButton>
          <WindowButton><svg width="10" height="10" viewBox="0 0 10 10" fill="none" stroke="#fff"><path d="M.5 2.500h7v7h-7zM2.500 2.500v-2h7v7h-2" /></svg></WindowButton>
          <WindowButton><Cross w={1.1} /></WindowButton>
        </WindowButtons>
      </TabStrip>

      <Toolbar>
        <NavIcons>
          <svg width="20" height="20" viewBox="0 0 20 20" fill="none" stroke="#fff" strokeWidth="2"><path d="M17 10H4M10 3.500L3.500 10l6.500 6.500" /></svg>
          <svg width="20" height="20" viewBox="0 0 20 20" fill="none" stroke="#87888b" strokeWidth="1.800"><path d="M3 10h13M10 3.500l6.500 6.500-6.500 6.500" /></svg>
          <svg width="20" height="20" viewBox="0 0 20 20" fill="none" stroke="#fff" strokeWidth="2"><path d="M15.500 12.500a6 6 0 1 1-.8-6.700" /><path d="M16.800 2.800v5.700h-5.700z" fill="#fff" stroke="none" /></svg>
        </NavIcons>
        <AddressBar>
          <svg width="16" height="16" viewBox="0 0 16 16"><circle cx="8" cy="8" r="6.500" fill="none" stroke="#9aa0a6" strokeWidth="1.400" /><path d="M7.200 7h1.600v4.500H7.200zM7.200 4.300h1.600v1.600H7.200z" fill="#9aa0a6" /></svg>
          <Url><b>localhost</b>:4200/client/(ClientRouter:history)</Url>
          <BarIcons>
            <MdVpnKey size={16} color="#c4c7cb" />
            <svg width="16" height="16" viewBox="0 0 16 16" fill="none" stroke="#b9bcc0" strokeWidth="1.200"><path d="M1 4v10.500h11V11M4 11c.5-4 3-5.500 6-5.500V2.500l4.800 4.500L10 11V8.500c-2.500 0-4.500.5-6 2.500z" /></svg>
            <svg width="16" height="16" viewBox="0 0 16 16" fill="none" stroke="#c4c7cb" strokeWidth="1.500"><path d="M8 1.500l1.800 4.400 4.700.3-3.600 3 1.200 4.700L8 11.300l-4.100 2.600 1.200-4.700-3.600-3 4.700-.3z" /></svg>
          </BarIcons>
        </AddressBar>
        <Extras>
          <svg width="18" height="14" viewBox="0 0 18 14"><path d="M2 0h14v14H2zM4 2v10h7V2z" fill="#fff" fillRule="evenodd" /></svg>
          <Avatar />
          <svg width="18" height="14" viewBox="0 0 18 14" fill="#fff"><circle cx="9.500" cy="2" r="1.600" /><circle cx="9.500" cy="7" r="1.600" /><circle cx="9.500" cy="12" r="1.600" /></svg>
        </Extras>
      </Toolbar>

      <InfoBar>
        <InfoText>You are using an unsupported command-line flag: --disable-web-security. Stability and security will suffer.</InfoText>
        <InfoClose><Cross w={2} /></InfoClose>
      </InfoBar>

      <Viewport>
        <Content>
          <TableCard>
            <Row $head>
              <span>Id</span><span>Price</span><span>First Location</span><span>Destination</span>
              <span>Start Time</span><span>End Time</span><span>Route Details</span>
            </Row>
            {rides.map(([id, price, from, to, start, end, order, rate], i) => (
              <Row key={id} $last={i === 5}>
                <span>{id}</span><span>{price}</span><span>{from}</span><span>{to}</span><span>{start}</span><span>{end}</span>
                <Button $w={133}>Driver Details</Button>
                <Button $w={109} $disabled={!order}>Order now</Button>
                <Button $w={117} $disabled={!rate}>Rate Driver</Button>
                <Button $w={171} $icon><FavoriteStar />Add To Favorite</Button>
              </Row>
            ))}
            <Paginator>
              <span>Items per page:</span>
              <PageSize>
                <span>10</span>
                <svg width="10" height="5" viewBox="0 0 10 5"><path d="M0 0h10L5 5z" fill="#8c8c8c" /></svg>
              </PageSize>
              <Range>0 of 0</Range>
              <PageButton><MdFirstPage size={24} /></PageButton>
              <PageButton><MdChevronLeft size={24} /></PageButton>
              <PageButton><MdChevronRight size={24} /></PageButton>
              <PageButton><MdLastPage size={24} /></PageButton>
            </Paginator>
          </TableCard>

          <MapBox>
            <CityMap />
            <ZoomControl>
              <ZoomButton><svg width="12" height="12" viewBox="0 0 12 12" stroke="#000" strokeWidth="2"><path d="M6 0v12M0 6h12" /></svg></ZoomButton>
              <ZoomButton><svg width="12" height="12" viewBox="0 0 12 12" stroke="#000" strokeWidth="2"><path d="M0 5h12" /></svg></ZoomButton>
            </ZoomControl>
            <Attribution>
              <svg width="11" height="8"><rect width="11" height="4" fill="#34509d" /><rect y="4" width="11" height="4" fill="#ad9400" /></svg>
              <u>Leaflet</u> | © <u>OpenStreetMap</u>
            </Attribution>
          </MapBox>

          <Fab $x={32}><MdLogout size={24} /></Fab>
          <Counter>+1</Counter>
          <Fab $x={1817}><MdChat size={24} /></Fab>

          <Dialog>
            <DialogTitle>Review Ride</DialogTitle>
            <DialogText>Review Driver and Vehicle</DialogText>
            <Stars>{[1, 0, 0, 0, 0].map((on, i) => <RatingStar key={i} on={on} />)}</Stars>
            <Comment>
              <span>Leave a comment*</span>
              <svg width="9" height="9" viewBox="0 0 9 9" stroke="#d0d0d0" strokeWidth="1"><path d="M0 8.500L8.500 0M4.500 8.500l4-4" /></svg>
            </Comment>
            <Actions>
              <Action $w={66}>Cancel</Action>
              <Action $w={67} $filled>Submit</Action>
            </Actions>
          </Dialog>
        </Content>
      </Viewport>

      <Taskbar>
        <SystemIcons>
          <svg width="16" height="16" viewBox="0 0 16 16" fill="#fff"><path d="M0 2l6.500-.9v6.400H0zM7.300 1L16 0v7.500H7.300zM0 8.400h6.500v6.500L0 14zM7.300 8.400H16V16l-8.700-1z" /></svg>
          <svg width="16" height="16" viewBox="0 0 16 16" fill="none" stroke="#fff" strokeWidth="1.500"><circle cx="10" cy="6" r="5.200" /><path d="M6.200 9.800L.5 15.500" /></svg>
        </SystemIcons>
        <Apps>
          {apps.map(([name, run, art]) => <AppButton key={name} $run={run}><Svg>{art}</Svg></AppButton>)}
        </Apps>
        <Tray>
          <TrayIcons>
            <svg width="14" height="16" viewBox="0 0 14 16" fill="none" stroke="#fff" strokeWidth="1.300"><path d="M1.500 11L7 5.500 12.500 11" /></svg>
            <svg width="18" height="16" viewBox="0 0 18 16"><path d="M4 10a5 5 0 0 1 9-4l1 6H3z" fill="#aaa" /><path d="M3.500 13.500a3 3 0 0 1 0-5.500q3 0 5 2 2-3.500 5-2.500 1 .5 1.500 2a2 2 0 0 1 0 4z" fill="#fff" /></svg>
            <svg width="14" height="18" viewBox="0 0 14 18"><rect x="3.500" y="1" width="7" height="11.500" rx="1" fill="#fff" /><path d="M1.500 8v4q0 2 2 2h7q2 0 2-2V8M7 14v3M4 16.500h6" stroke="#fff" fill="none" /></svg>
            <svg width="17" height="16" viewBox="0 0 17 16" fill="none" stroke="#fff"><path d="M6 3.500h10.500v7H4.500V6M.5 2.500h4v3.500h-4zM2.500 6v6.500h5M10 11v2.500M6.500 13.500h8" /></svg>
            <svg width="17" height="16" viewBox="0 0 17 16" fill="none" stroke="#fff"><path d="M.5 6v4.500H3l3.500 3V2.500L3 6z" /><path d="M9 6q1.500 2 0 4.500" /><path d="M11.500 4q2.500 4 0 8M14 2q4 6 0 12" stroke="#8794a0" /></svg>
          </TrayIcons>
          <Lang>ENG</Lang>
          <Clock>12:23<br />03.02.2023.</Clock>
          <Notices>
            <svg width="28" height="40" viewBox="0 0 28 40">
              <path d="M0 12h16v12H7l-3.500 4v-4H0z" fill="#fff" />
              <path d="M3 15.500h10M3 18h10M3 20.500h6" stroke="#173a57" />
              <circle cx="15.500" cy="28" r="8" fill="#3b4248" stroke="#8a8f94" />
              <text x="15.500" y="32.300" textAnchor="middle" fontFamily="Open Sans, sans-serif" fontWeight="600" fontSize="12" fill="#fff">4</text>
            </svg>
          </Notices>
        </Tray>
      </Taskbar>

      <Frame $x={2} $y={97} $w={1900} $h={945} $color="#88001b" />
      <Frame $x={147} $y={689} $w={507} $h={335} $color="#0ed145" />
      <Frame $x={814} $y={395} $w={279} $h={364} $color="#8cfffb" />
      <Note $x={1111} $y={710} $h={70} $size={48} $color="#8cfffb" $ls={-1.25}>ride-review</Note>
      <Note $x={653} $y={880} $h={82} $size={61} $color="#0ed145" $ls={-1.3}>map</Note>
      <Note $x={1648} $y={877} $h={70} $size={62} $color="#88001b" $ls={-1.5}>history</Note>
    </Screen>
  );
}
